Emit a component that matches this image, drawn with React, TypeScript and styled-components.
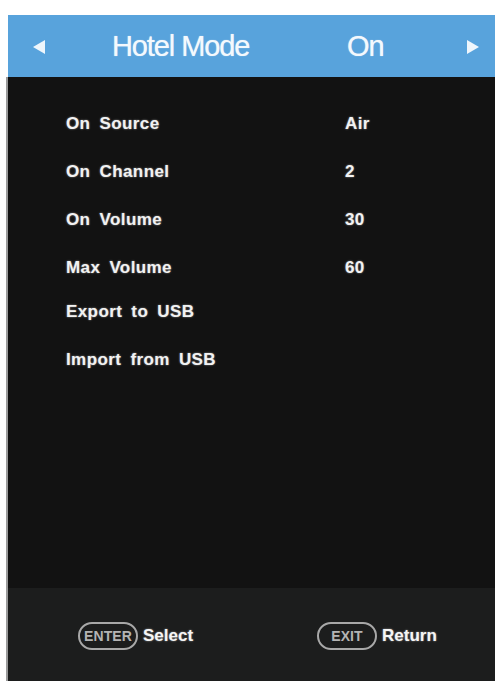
import React from 'react';
import styled, { createGlobalStyle } from 'styled-components';

const GlobalStyle = createGlobalStyle`
  html, body {
    margin: 0;
    padding: 0;
    background: #ffffff;
  }
  body {
    font-family: "Liberation Sans", Arial, sans-serif;
    overflow: hidden;
  }
`;

const S = {
  Screen: styled.div`
    display: flex;
    flex-direction: column;
    width: 487px;
    height: 666px;
    margin: 15px 0 0 8px;
  `,
  Header: styled.div`
    display: grid;
    grid-template-columns: 79px 235px 120px auto;
    align-items: center;
    height: 62px;
    padding: 1px 13px 0 25px;
    box-sizing: border-box;
    background: #58a3dc;
    color: #f4f9fd;
    font-size: 29px;
    letter-spacing: -1.1px;
    text-shadow: 0 0 1px rgba(255, 255, 255, 0.7);
  `,
  Arrow: styled.svg`
    display: block;
    width: 12px;
    height: 14px;
  `,
  Body: styled.div`
    display: flex;
    flex-direction: column;
    flex: 1;
    padding: 23px 0 0 58px;
    background: #121212;
    border-left: 2px solid #9a9a9a;
    margin-left: -2px;
  `,
  Row: styled.div<{ $pull?: number }>`
    display: grid;
    grid-template-columns: 279px auto;
    align-items: center;
    height: 48px;
    margin-top: ${(p) => (p.$pull ? `-${p.$pull}px` : '0')};
    color: #f2f2f2;
    font-size: 17px;
    font-weight: 700;
    letter-spacing: 0.4px;
    word-spacing: 4px;
    text-shadow: 0 0 2px rgba(255, 255, 255, 0.55);
  `,
  Footer: styled.div`
    display: grid;
    grid-template-columns: 239px auto;
    align-items: center;
    height: 93px;
    padding: 3px 0 0 70px;
    box-sizing: border-box;
    background: #1c1d1d;
    border-left: 2px solid #9a9a9a;
    margin-left: -2px;
  `,
  Hint: styled.div`
    display: flex;
    align-items: center;
    gap: 5px;
  `,
  Key: styled.span`
    display: inline-flex;
    align-items: center;
    justify-content: center;
    box-sizing: border-box;
    width: 60px;
    height: 28px;
    border: 2px solid #a8a8a8;
    border-radius: 14px;
    color: #b4b4b4;
    font-size: 14px;
    font-weight: 700;
    letter-spacing: 0.1px;
  `,
  HintLabel: styled.span`
    color: #f5f5f5;
    font-size: 17px;
    font-weight: 700;
    text-shadow: 0 0 2px rgba(255, 255, 255, 0.55);
  `,
};

const LeftArrow = () => (
  <S.Arrow viewBox="0 0 12 14">
    <polygon points="12,0 0,7 12,14" fill="#eef6fc" />
  </S.Arrow>
);

const RightArrow = () => (
  <S.Arrow viewBox="0 0 12 14">
    <polygon points="0,0 12,7 0,14" fill="#eef6fc" />
  </S.Arrow>
);

const settings: { label: string; value?: string; pull?: number }[] = [
  { label: 'On Source', value: 'Air' },
  { label: 'On Channel', value: '2' },
  { label: 'On Volume', value: '30' },
  { label: 'Max Volume', value: '60' },
  { label: 'Export to USB', pull: 4 },
  { label: 'Import from USB' },
];

const App = () => {
  return (
    <>
      <GlobalStyle />
      <S.Screen>
        <S.Header>
          <LeftArrow />
          <span>Hotel Mode</span>
          <span>On</span>
          <RightArrow />
        </S.Header>
        <S.Body>
          {settings.map((s) => (
            <S.Row key={s.label} $pull={s.pull}>
              <span>{s.label}</span>
              <span>{s.value}</span>
            </S.Row>
          ))}
        </S.Body>
        <S.Footer>
          <S.Hint>
            <S.Key>ENTER</S.Key>
            <S.HintLabel>Select</S.HintLabel>
          </S.Hint>
          <S.Hint>
            <S.Key>EXIT</S.Key>
            <S.HintLabel>Return</S.HintLabel>
          </S.Hint>
        </S.Footer>
      </S.Screen>
    </>
  );
};

export default App;
